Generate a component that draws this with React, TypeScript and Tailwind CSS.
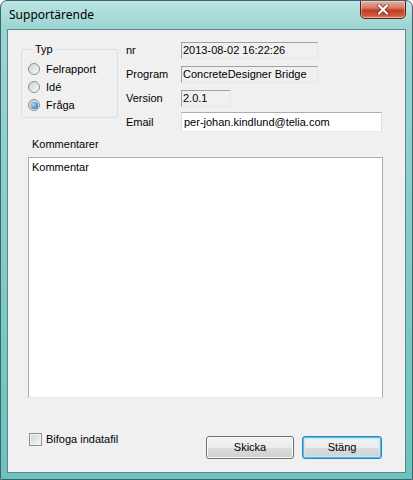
import React from 'react';

const Radio: React.FC<{ label: string; checked?: boolean }> = ({ label, checked }) => (
  <div className="flex items-center h-[18px]">
    <span className="w-[12px] h-[12px] rounded-full border border-[#8e8f8f] bg-[linear-gradient(135deg,#cfcfcf,#fbfbfb)] flex items-center justify-center">
      {checked && (
        <span className="w-[7px] h-[7px] rounded-full bg-[radial-gradient(circle_at_35%_35%,#a6dcff,#1c5a9a)] shadow-[0_0_1px_#2a5f94]" />
      )}
    </span>
    <span className="ml-[6px]">{label}</span>
  </div>
);

const ReadOnlyBox: React.FC<{ value: string; className: string }> = ({ value, className }) => (
  <div
    className={`h-[17px] pl-[1px] flex items-center border border-[#a0a0a0] border-r-[#e8e8e8] border-b-[#e8e8e8] bg-[#f0f0f0] ${className}`}
  >
    {value}
  </div>
);

export default function App() {
  return (
    <div className="w-[413px] h-[480px] flex flex-col overflow-hidden rounded-t-[7px] border border-[#3d6668] bg-[linear-gradient(180deg,#bce4e2_0%,#9bd5d2_28px,#7fcac7_60%,#6cc2bf_100%)]">
      <div className="h-[28px] shrink-0 flex items-start justify-between pl-[8px] pr-[6px]">
        <span className="pt-[6px] leading-[16px] text-[12px] text-black font-['Noto_Sans',sans-serif]">
          Supportärende
        </span>
        <button className="w-[46px] h-[19px] -mt-[1px] flex items-center justify-center rounded-b-[5px] border border-[#5b2019] bg-[linear-gradient(180deg,#eab1a4_0%,#d77a66_40%,#c13d24_55%,#d0573f_85%,#e08a6d_100%)] shadow-[inset_0_0_0_1px_rgba(255,255,255,0.35)]">
          <svg width="14" height="11" viewBox="0 0 14 11">
            <path d="M3 1.5 L11 9.5 M11 1.5 L3 9.5" stroke="#5a1f1a" strokeWidth="4" strokeLinecap="round" opacity="0.55" />
            <path d="M3 1.5 L11 9.5 M11 1.5 L3 9.5" stroke="#ffffff" strokeWidth="2.2" strokeLinecap="round" />
          </svg>
        </button>
      </div>

      <div className="flex-1 flex px-[6px] pb-[6px]">
        <div className="flex-1 flex flex-col border border-[#5f8787] bg-[#f0f0f0] text-[11px] leading-[13px] text-black font-['Liberation_Sans',Arial,sans-serif]">
          <div className="flex items-start pt-[12px]">
            <fieldset className="ml-[13px] mt-[1px] w-[97px] rounded-[3px] border border-[#d5dfe5] pl-[6px] pb-[3px]">
              <legend className="ml-[5px] px-[2px] leading-[13px]">Typ</legend>
              <div className="pt-[4px]">
                <Radio label="Felrapport" />
                <Radio label="Idé" />
                <Radio label="Fråga" checked />
              </div>
            </fieldset>

            <div className="ml-[8px] flex flex-col">
              <div className="flex items-center">
                <span className="w-[55px]">nr</span>
                <ReadOnlyBox value="2013-08-02 16:22:26" className="w-[137px]" />
              </div>
              <div className="mt-[7px] flex items-center">
                <span className="w-[55px]">Program</span>
                <ReadOnlyBox value="ConcreteDesigner Bridge" className="w-[137px]" />
              </div>
              <div className="mt-[7px] flex items-center">
                <span className="w-[55px]">Version</span>
                <ReadOnlyBox value="2.0.1" className="w-[50px]" />
              </div>
              <div className="mt-[5px] flex items-center">
                <span className="w-[55px]">Email</span>
                <div className="w-[201px] h-[20px] pl-[2px] flex items-center border border-[#abadb3] border-x-[#dbdfe6] border-b-[#e3e9ef] bg-white">
                  per-johan.kindlund@telia.com
                </div>
              </div>
            </div>
          </div>

          <span className="ml-[24px] mt-[6px]">Kommentarer</span>
          <div className="ml-[20px] mt-[6px] w-[355px] h-[241px] border border-[#abadb3] border-b-[#e3e9ef] bg-white pl-[3px] pt-[3px]">
            Kommentar
          </div>

          <div className="mt-[35px] flex items-start">
            <div className="ml-[21px] flex items-center">
              <span className="w-[13px] h-[13px] border border-[#8e8f8f] bg-[linear-gradient(135deg,#d0d0d0,#fafafa)] shadow-[inset_0_0_0_1px_#f4f4f4]" />
              <span className="ml-[4px]">Bifoga indatafil</span>
            </div>
            <div className="ml-auto mr-[23px] mt-[3px] flex">
              <button className="w-[88px] h-[23px] rounded-[3px] border border-[#707070] bg-[linear-gradient(180deg,#f3f3f3_0%,#ebebeb_50%,#dddddd_50%,#cfcfcf_100%)] shadow-[inset_0_0_0_1px_#fbfbfb]">
                Skicka
              </button>
              <button className="ml-[8px] w-[80px] h-[23px] rounded-[3px] border border-[#3c7fb1] bg-[linear-gradient(180deg,#f3f3f3_0%,#ebebeb_50%,#dddddd_50%,#cfcfcf_100%)] shadow-[inset_0_0_0_1px_#48c1f5,inset_0_0_2px_2px_#c4e8f8]">
                Stäng
              </button>
            </div>
          </div>
        </div>
      </div>
    </div>
  );
}
